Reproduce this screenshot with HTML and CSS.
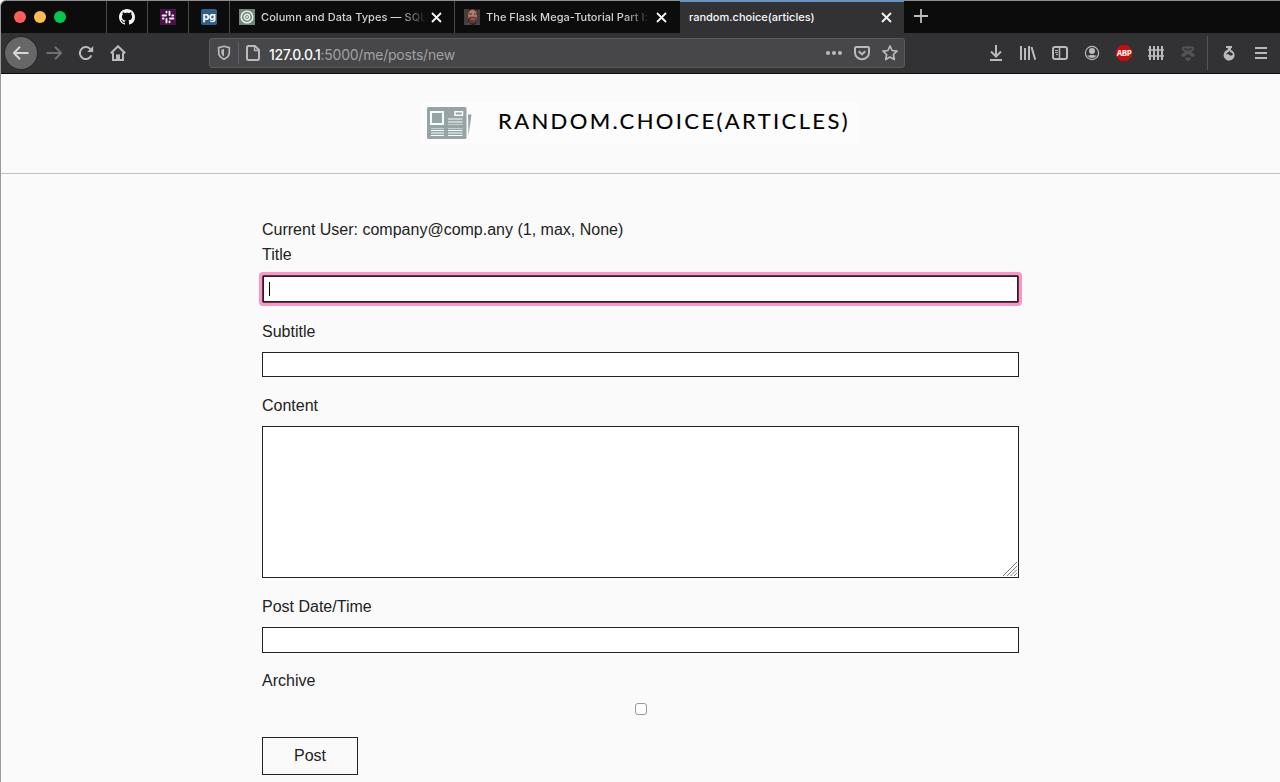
FILE: index.html
```html
<!DOCTYPE html>
<html lang="en">
<head>
<meta charset="utf-8">
<title>random.choice(articles)</title>
<link rel="stylesheet" href="styles.css">
</head>
<body>
<div class="window">
  <div class="tabs">
    <div class="lights"><i class="red"></i><i class="yellow"></i><i class="green"></i></div>
    <div class="pin"><svg width="16" height="16" viewBox="0 0 16 16"><path fill="#f4f4f4" d="M8 0C3.58 0 0 3.58 0 8c0 3.54 2.29 6.53 5.47 7.59.4.07.55-.17.55-.38 0-.19-.01-.82-.01-1.49-2.01.37-2.53-.49-2.69-.94-.09-.23-.48-.94-.82-1.13-.28-.15-.68-.52-.01-.53.63-.01 1.08.58 1.23.82.72 1.21 1.87.87 2.33.66.07-.52.28-.87.51-1.07-1.78-.2-3.64-.89-3.64-3.95 0-.87.31-1.59.82-2.15-.08-.2-.36-1.02.08-2.12 0 0 .67-.21 2.2.82.64-.18 1.32-.27 2-.27s1.36.09 2 .27c1.53-1.04 2.2-.82 2.2-.82.44 1.1.16 1.92.08 2.12.51.56.82 1.27.82 2.15 0 3.07-1.87 3.75-3.65 3.95.29.25.54.73.54 1.48 0 1.07-.01 1.93-.01 2.2 0 .21.15.46.55.38A8 8 0 0 0 16 8c0-4.42-3.58-8-8-8z"/></svg></div>
    <div class="pin"><svg width="16" height="16"><rect width="16" height="16" fill="#481349"/><g stroke="#f5eef5" stroke-width="1.9" stroke-linecap="round"><path d="M9.500 2.600V6M6.500 13.400V10M2.600 6.500H6M13.400 9.500H10M6.500 2.800v.8M9.500 13.200v-.8M13.200 6.500h-.8M2.800 9.500h.8"/></g></svg></div>
    <div class="pin"><span class="pg">pg</span></div>
    <div class="tab"><svg width="16" height="16"><rect width="16" height="16" fill="#6f8878"/><g fill="none" stroke="#e8eee8"><circle cx="8" cy="8" r="5.8" stroke-width="1.5"/><circle cx="8" cy="8" r="2.7" stroke-width="1.5"/></g><circle cx="8" cy="8" r="1" fill="#e8eee8"/></svg><span class="tab-title t1">Column and Data Types — SQL</span><svg class="close" width="11" height="11"><path d="M1 1l9 9M10 1l-9 9"/></svg></div>
    <div class="tab"><svg width="16" height="16"><rect width="16" height="16" fill="#29201f"/><path fill="#493b38" d="M0 0h5v9L2 16H0zM12 1h4v15h-4z"/><ellipse cx="8.5" cy="6.5" rx="4.4" ry="6" fill="#b17b6b"/><path fill="#653d35" d="M5 8q3-1 7 0v4q-3 5-7 0z"/><path stroke="#48332f" d="M5 5h3m2 0h3"/><path stroke="#b77d70" d="M7 10h4"/><path fill="#484545" d="M0 16l4-4 4 4zM10 16l4-3 2 3z"/></svg><span class="tab-title t2">The Flask Mega-Tutorial Part I: I</span><svg class="close" width="11" height="11"><path d="M1 1l9 9M10 1l-9 9"/></svg></div>
    <div class="tab active"><span class="tab-title t3">random.choice(articles)</span><svg class="close" width="11" height="11"><path d="M1 1l9 9M10 1l-9 9"/></svg></div>
    <svg class="plus" width="14" height="14"><path d="M7 0v14M0 7h14"/></svg>
  </div>
  <div class="toolbar">
    <div class="nav">
      <span class="back"><svg width="16" height="16" viewBox="0 0 16 16"><path d="M15.5 8H1M7 1.8L.9 8 7 14.2"/></svg></span>
      <svg class="dim" width="16" height="16" viewBox="0 0 16 16"><path d="M.5 8H15M9 1.8L15.1 8 9 14.2"/></svg>
      <svg width="16" height="16" viewBox="0 0 16 16"><path d="M13.4 10.4A6 6 0 1 1 12 3.7L14 5.4"/><path class="fill" d="M15.2 1v6H9.2z"/></svg>
      <svg width="16" height="16" viewBox="0 0 16 16"><path d="M.8 8.3L8 1.2l7.2 7.1M3 7.5V15h10V7.5"/><path d="M7 15v-4.5h2V15"/></svg>
    </div>
    <div class="address">
      <svg class="shield" width="14" height="16" viewBox="0 0 14 16"><path stroke-width="1.7" d="M7 1.3l5.3 1.4v4.6c0 3.2-2 5.6-5.3 7-3.3-1.4-5.3-3.8-5.3-7V2.7z"/><path class="fill" d="M7 4v7.6C5.2 10.5 4.3 9 4.3 7V4.7z"/></svg>
      <i class="rule"></i>
      <svg class="doc" width="14" height="16" viewBox="0 0 14 16"><path d="M3 1h6l4 4v8.5a1.5 1.5 0 0 1-1.5 1.5h-9A1.5 1.5 0 0 1 1 13.500V2.500A1.500 1.500 0 0 1 2.500 1z"/><path stroke-width="1.3" d="M8.500 1v4.500H13"/></svg>
      <span class="url"><b>127.0.0.1</b>:5000/me/posts/new</span>
      <span class="url-tools">
        <svg width="16" height="16"><g class="fill"><circle cx="2" cy="8" r="2"/><circle cx="8" cy="8" r="2"/><circle cx="14" cy="8" r="2"/></g></svg>
        <svg width="16" height="16" viewBox="0 0 16 16"><path d="M2 2h12q1 0 1 1v4.500a7 6.800 0 0 1-14 0V3q0-1 1-1z"/><path d="M4.700 6.300L8 9.300l3.300-3"/></svg>
        <svg width="16" height="16" viewBox="0 0 16 16"><path stroke-width="1.700" stroke-linejoin="round" d="M8 1l2.100 4.500 4.900.6-3.600 3.400.9 5L8 12.100l-4.300 2.400.9-5L1 6.100l4.900-.6z"/></svg>
      </span>
    </div>
    <div class="tools">
      <svg width="16" height="16" viewBox="0 0 16 16"><path d="M8 0v11M3 6.500l5 5 5-5M2 15h12"/></svg>
      <svg width="16" height="16" viewBox="0 0 16 16"><path d="M1 1v14M5 3v12M9 1v14M11.500 2l3.700 12.700"/></svg>
      <svg width="16" height="16" viewBox="0 0 16 16"><rect x="1" y="2" width="14" height="12" rx="2"/><path stroke-width="1.500" d="M7.500 2v12"/><path stroke-width="1" d="M3 5.500h3M3 7.500h3M4 9.500h2"/></svg>
      <svg width="16" height="16" viewBox="0 0 16 16"><circle cx="8" cy="8" r="6.600" stroke-width="1.200"/><circle class="fill" cx="8" cy="6" r="3"/><path class="fill" d="M3.300 10q1 1 3 0h3.400q2 1 3 0Q11.500 13 8 13t-4.700-3z"/></svg>
      <span class="abp">ABP</span>
      <svg width="16" height="16" viewBox="0 0 16 16"><path d="M2 1v14M6 1v14M10 1v14M14 1v14"/><path stroke-width="1.300" d="M0 5h16M0 11h16"/></svg>
      <svg class="faint" width="16" height="16" viewBox="0 0 16 16"><path class="fill" fill-rule="evenodd" d="M2 2l6-1 6 1v3l-3 2 3 2 1 2-3 1-2-2-2-1-2 1-2 2-3-1 1-2 3-2-3-2zM4 3v1l2 1.500h4L12 4V3L8 4zM5 12l2 1 1-1 1 1 2-1-1 3-2 1-2-1z"/></svg>
      <i class="divider"></i>
      <svg width="16" height="16" viewBox="0 0 16 16"><path class="fill" fill-rule="evenodd" d="M5 1h6v2h-1v2a5.500 5.500 0 1 1-5 .6Q7 5 7 3H5zM5 9.500q2-1 3.500.5t3.500-.5Q11.500 7.500 9 7V5q-.5 2-2.500 2.500Q5.300 8.300 5 9.500z"/></svg>
      <svg width="16" height="16" viewBox="0 0 16 16"><path d="M2 3h12M2 8h12M2 13h12"/></svg>
    </div>
  </div>
  <div class="page">
    <header class="header">
      <div class="logo">
        <svg width="46" height="34" viewBox="0 0 46 34"><g fill="#95a5a5"><rect x="0" y="1" width="39.500" height="32" rx="1.500"/><path d="M41 8.500h3.500L41.500 29.500z"/></g><g fill="none" stroke="#fcfcfc"><path stroke-width="2" d="M4 6h12v12H4z"/><path stroke-width="1.500" d="M28 5.800h7.500v3.500H28z"/><path stroke-width="1.200" d="M21 13h14.500M21 16h14.500M4 24.500h13M4 27h13M4 29.500h13M21 24.500h14.500M21 27h14.500M21 29.500h14.500"/></g><path stroke="#c4cece" d="M4 22.500h13M21 22.500h14.500M21 18.500h14.500"/></svg>
        <span class="wordmark">RANDOM.CHOICE(ARTICLES)</span>
      </div>
    </header>
    <form class="form">
      <div class="user">Current User: company@comp.any (1, max, None)</div>
      <label>Title</label>
      <div class="field focused"><i class="caret"></i></div>
      <label>Subtitle</label>
      <div class="field"></div>
      <label>Content</label>
      <div class="field area"><svg width="14" height="14"><path d="M0 14L14 0M4 14L14 4M7.500 14L14 7.500M11 14l3-3"/></svg></div>
      <label>Post Date/Time</label>
      <div class="field date"></div>
      <label>Archive</label>
      <div class="check"></div>
      <button type="button" class="post">Post</button>
    </form>
  </div>
</div>
</body>
</html>
```
FILE: styles.css
```css
* { box-sizing: border-box; }
body { margin: 0; background: #fafafa; overflow: hidden; }
svg { display: block; flex: none; fill: none; }
i { display: block; flex: none; }
.window { height: 782px; border-left: 1px solid #999; border-top: 1px solid #8b8d8d; border-top-left-radius: 6px; overflow: hidden; background: #fafafa; }

.tabs { display: flex; height: 32px; background: #0c0c0d; font: 500 11px Inter, sans-serif; color: #d2d2d4; }
.lights { display: flex; width: 105px; padding: 10px 0 0 13px; gap: 8px; }
.lights i { width: 12px; height: 12px; border-radius: 50%; }
.red { background: #ff5f5b; }
.yellow { background: #ffbd4f; }
.green { background: #00ca4e; }
.pin { width: 41px; border-left: 1px solid #4b4b4c; display: flex; align-items: center; justify-content: center; }
.pg { width: 16px; height: 16px; border-radius: 2px; background: #2e6188; color: #fff; font: bold 11px/14px Inter, sans-serif; text-align: center; letter-spacing: -.4px; }
.tab { width: 225px; border-left: 1px solid #4b4b4c; padding: 0 12px 0 9px; display: flex; align-items: center; }
.tab-title { margin-left: 6px; line-height: 20px; white-space: nowrap; }
.t1, .t2 { -webkit-mask-image: linear-gradient(90deg, #000 138px, transparent 166px); mask-image: linear-gradient(90deg, #000 138px, transparent 166px); }
.t1 { letter-spacing: .06px; }
.t2 { letter-spacing: .04px; }
.close { margin-left: auto; stroke: #f5f5f5; stroke-width: 1.8; }
.active { background: #323234; color: #f9f9fa; border-left: 1px solid #0c0c0d; box-shadow: inset 0 1px #3f97f8; padding: 0 12px 0 8px; }
.t3 { margin-left: 1px; }
.plus { margin: 8px 0 0 10px; stroke: #bcbcbe; stroke-width: 1.8; }

.toolbar { display: flex; align-items: center; height: 41px; background: #323234; border-bottom: 1px solid #0c0c0d; }
.toolbar svg { stroke: #bababc; stroke-width: 2; }
.toolbar .fill { fill: #bababc; stroke: none; }
.nav { display: flex; align-items: center; gap: 16px; width: 208px; padding-left: 4px; }
.back { width: 32px; height: 32px; border-radius: 50%; background: #676767; box-shadow: 0 0 0 1px #292929; display: grid; place-items: center; margin-right: -7px; }
.toolbar .back svg { stroke: #d6d6d7; }
.toolbar .dim { stroke: #707072; }
.address { width: 696px; height: 30px; display: flex; align-items: center; border: 1px solid #5a5a5b; border-radius: 3px; background: #474749; padding: 0 6px 0 7px; }
.rule { width: 1px; height: 22px; margin: 0 7px 0 7px; background: #59606e; }
.url { margin-left: 9px; padding-top: 3px; font: 14px/20px Inter, sans-serif; letter-spacing: -.22px; color: #a1a1a3; white-space: nowrap; }
.url b { font-weight: 500; color: #fafafa; letter-spacing: -.35px; }
.url-tools { display: flex; gap: 12px; margin-left: auto; }
.tools { margin-left: auto; padding-right: 11px; display: flex; align-items: center; gap: 16px; }
.abp { width: 16px; height: 16px; background: #c70d0d; clip-path: polygon(30% 0, 70% 0, 100% 30%, 100% 70%, 70% 100%, 30% 100%, 0 70%, 0 30%); color: #fff; font: bold 8px/16px "Open Sans", sans-serif; letter-spacing: -.5px; text-align: center; }
.toolbar .faint { opacity: .25; }
.divider { width: 1px; height: 34px; background: #565658; margin: 0 -3px 0 -5px; }

.header { height: 100px; border-bottom: 1px solid #c2c2c2; display: flex; justify-content: center; padding-top: 28px; }
.logo { width: 437px; height: 43px; background: #fcfcfc; display: flex; padding: 4px 0 0 5px; }
.wordmark { margin-left: 25px; font: 400 22px/29px Lato, sans-serif; letter-spacing: 2.38px; color: #000; -webkit-text-stroke: .15px #000; white-space: nowrap; }

.form { display: flex; flex-direction: column; width: 757px; margin: 43px 0 0 261px; font: 16px/25px "Liberation Sans", Arial, sans-serif; color: #222; }
.form label { display: block; height: 25px; }
.field { height: 25px; margin: 8px 0 16px; border: 1px solid #222; background: #fff; }
.focused { height: 28px; border-color: #7d2850; box-shadow: inset 0 0 0 1px #222; outline: 3px solid #f49ac5; border-radius: 1px; padding: 6px 0 0 6px; }
.caret { width: 1px; height: 14px; background: #000; }
.area { height: 152px; display: flex; align-items: flex-end; justify-content: flex-end; padding: 1px; }
.area svg { stroke: #777; stroke-width: 1; }
.date { height: 26px; margin-bottom: 15px; }
.check { width: 12px; height: 12px; margin: 10px auto 22px; border: 1px solid #999; border-radius: 3px; background: #fff; }
.post { width: 96px; height: 38px; padding: 0 0 2px; border: 1px solid #222; background: #fafafa; color: #222; font: 16px/25px "Liberation Sans", Arial, sans-serif; }
```
